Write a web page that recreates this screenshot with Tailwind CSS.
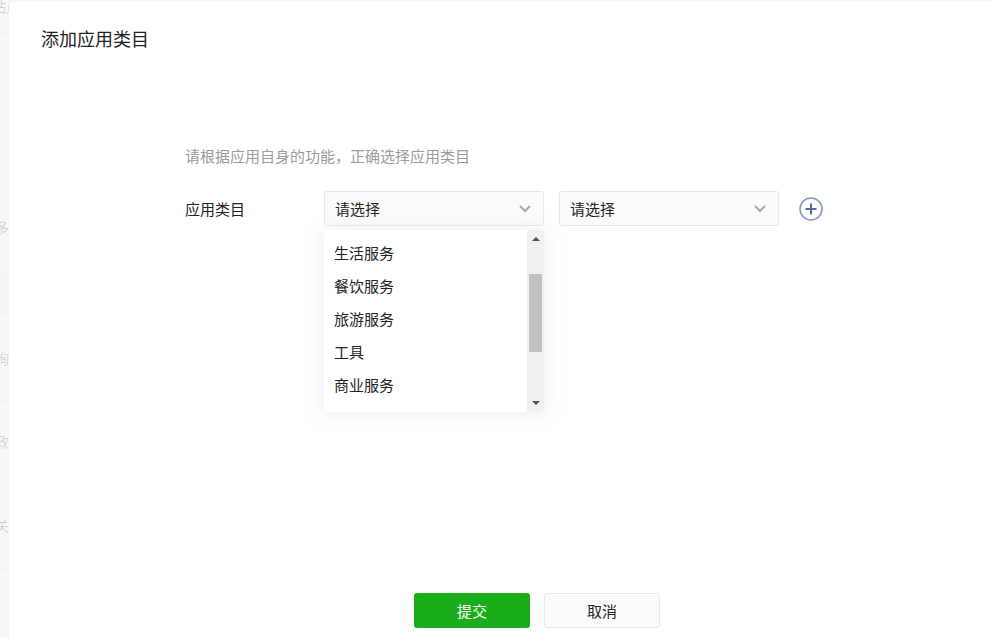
<!DOCTYPE html>
<html lang="zh-CN">
<head>
    <meta charset="UTF-8">
    <meta name="viewport" content="width=device-width, initial-scale=1.0">
    <title>添加应用类目</title>
    <script src="https://cdn.jsdelivr.net/npm/@tailwindcss/browser@4"></script>
</head>
<body class="flex min-h-screen bg-[#f6f8f8] font-['Noto_Sans_CJK_SC',sans-serif] text-[15px] leading-[22px] text-[#222]">
    <!-- page behind the dialog -->
    <div class="flex w-[9px] shrink-0 flex-col overflow-hidden text-sm leading-5 font-light text-[#c4c9cd]" aria-hidden="true">
        <div class="flex h-[34px] items-start justify-start border-b border-[#eff2f2] whitespace-nowrap"><span class="-mt-1 -ml-2">站点</span></div>
        <div class="flex h-[238px] items-end justify-end pb-[35px]">多</div>
        <div class="h-[44px] bg-[#f3f5f7]"></div>
        <div class="flex h-[85px] items-center justify-end border-b border-[#eff2f2]">询</div>
        <div class="flex h-[84px] items-center justify-end border-b border-[#eff2f2] pb-1">政</div>
        <div class="flex h-[85px] items-center justify-end border-b border-[#eff2f2] pb-1">关</div>
        <div class="h-[34px] border-b border-[#eff2f2]"></div>
    </div>

    <main class="mt-px flex flex-1 flex-col rounded-tl-lg bg-white">
        <h2 class="px-8 pt-6 text-lg leading-[26px]">添加应用类目</h2>

        <form id="categoryForm" class="pt-[94px] pl-[176px]">
            <p class="text-[#9a9a9a]">请根据应用自身的功能，正确选择应用类目</p>
            <div class="mt-6 flex items-center">
                <label for="category" class="w-[139px]">应用类目</label>
                <div class="relative">
                    <select id="category" class="h-[35px] w-[220px] appearance-none rounded-[3px] border border-[#e4e8eb] bg-[#fbfbfb] px-[10px] outline-none">
                        <option>请选择</option>
                    </select>
                    <svg class="pointer-events-none absolute top-[14px] right-[13px]" width="12" height="8" viewBox="0 0 12 8" fill="none" stroke="#a8a8a8" stroke-width="2"><path d="M1 1l5 5 5-5"/></svg>
                    <div class="absolute top-[39px] left-0 flex h-[182px] w-[220px] overflow-hidden rounded-[3px] bg-white shadow-[0_1px_20px_0_rgba(228,232,235,0.8)]">
                        <ul class="flex-1 pt-[6px]" role="listbox" aria-label="应用类目">
                            <li role="option" class="px-[10px] leading-[33px]">生活服务</li>
                            <li role="option" class="px-[10px] leading-[33px]">餐饮服务</li>
                            <li role="option" class="px-[10px] leading-[33px]">旅游服务</li>
                            <li role="option" class="px-[10px] leading-[33px]">工具</li>
                            <li role="option" class="px-[10px] leading-[33px]">商业服务</li>
                        </ul>
                        <div class="flex w-[17px] flex-col items-center bg-[#f1f1f1] py-[7px]">
                            <svg width="8" height="4" viewBox="0 0 8 4" fill="#505050"><path d="M0 4l4-4 4 4z"/></svg>
                            <div class="mt-[33px] h-[78px] w-[13px] bg-[#c1c1c1]"></div>
                            <svg class="mt-auto" width="8" height="4" viewBox="0 0 8 4" fill="#505050"><path d="M0 0l4 4 4-4z"/></svg>
                        </div>
                    </div>
                </div>
                <div class="relative ml-[15px]">
                    <select aria-label="二级类目" class="h-[35px] w-[220px] appearance-none rounded-[3px] border border-[#e4e8eb] bg-[#fbfbfb] px-[10px] outline-none">
                        <option>请选择</option>
                    </select>
                    <svg class="pointer-events-none absolute top-[14px] right-[13px]" width="12" height="8" viewBox="0 0 12 8" fill="none" stroke="#a8a8a8" stroke-width="2"><path d="M1 1l5 5 5-5"/></svg>
                </div>
                <button type="button" aria-label="添加" class="ml-5">
                    <svg width="24" height="24" viewBox="0 0 24 24" fill="none"><circle cx="12" cy="12" r="11" stroke="#8494bd" stroke-width="1.5"/><path d="M12 6.5v11M6.5 12h11" stroke="#5468a0" stroke-width="2"/></svg>
                </button>
            </div>
        </form>

        <div class="mt-auto flex justify-center gap-[14px] pb-[10px] pl-[73px]">
            <button type="submit" form="categoryForm" class="h-[35px] w-[116px] rounded-[3px] bg-[#1aad19] text-white">提交</button>
            <button type="button" class="h-[35px] w-[116px] rounded-[3px] border border-[#e4e8eb] bg-[#fbfbfb]">取消</button>
        </div>
    </main>
</body>
</html>
